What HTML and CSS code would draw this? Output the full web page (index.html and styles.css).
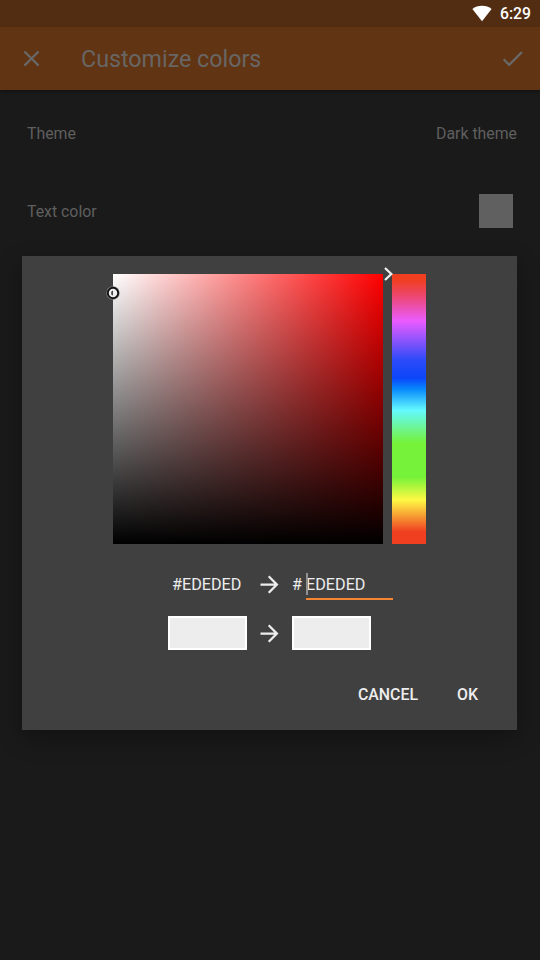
FILE: index.html
```html
<!DOCTYPE html>
<html lang="en">
<head>
<meta charset="utf-8">
<title>Customize colors</title>
<link rel="stylesheet" href="styles.css">
</head>
<body>
<div class="status-bar">
  <svg class="wifi" viewBox="0 0 20 17"><path d="M0.4 3.9C3 1.8 6.300 .7 10 .7s7 1.100 9.600 3.200L10 16.200z"/></svg>
  <span class="clock">6:29</span>
</div>
<header class="app-bar">
  <svg class="icon" viewBox="0 0 24 24"><path d="M19 6.410L17.590 5 12 10.590 6.410 5 5 6.410 10.590 12 5 17.590 6.410 19 12 13.410 17.590 19 19 17.590 13.410 12z"/></svg>
  <h1 class="title">Customize colors</h1>
  <svg class="icon check" viewBox="0 0 24 24"><path d="M9 16.170L4.830 12l-1.420 1.410L9 19 21 7l-1.410-1.410z"/></svg>
</header>
<main class="settings">
  <div class="row"><span>Theme</span><span>Dark theme</span></div>
  <div class="row"><span>Text color</span><span class="swatch"></span></div>
</main>
<div class="dialog">
  <div class="picker">
    <div class="shade">
      <svg class="target" viewBox="0 0 14 14"><circle cx="7" cy="7" r="6.700" class="halo"/><circle cx="7" cy="7" r="5.200" class="ring"/><path d="M7 4.400a1.900 2.600 0 0 0 0 5.200z" class="core"/></svg>
    </div>
    <div class="hue">
      <svg class="pointer" viewBox="0 0 9 14"><path d="M1 1l6.300 6L1 13"/></svg>
    </div>
  </div>
  <div class="values">
    <span class="old-hex">#EDEDED</span>
    <svg class="arrow" viewBox="0 0 24 24"><path d="M12 4l-1.410 1.410L16.170 11H4v2h12.170l-5.580 5.590L12 20l8-8z"/></svg>
    <div class="new-hex"><span>#</span><span class="field">EDEDED</span></div>
  </div>
  <div class="values samples">
    <span class="sample"></span>
    <svg class="arrow" viewBox="0 0 24 24"><path d="M12 4l-1.410 1.410L16.170 11H4v2h12.170l-5.580 5.590L12 20l8-8z"/></svg>
    <span class="sample"></span>
  </div>
  <div class="actions"><span>CANCEL</span><span>OK</span></div>
</div>
</body>
</html>
```
FILE: styles.css
```css
* { box-sizing: border-box; }
body {
  margin: 0;
  width: 540px;
  height: 960px;
  overflow: hidden;
  position: relative;
  background: #1a1a1a;
  color: #5f5f5f;
  font: 15.850px/20px Roboto, sans-serif;
}
svg { display: block; flex: none; }
.status-bar {
  height: 27px;
  padding-right: 9px;
  display: flex;
  align-items: center;
  justify-content: flex-end;
  gap: 8px;
  background: #522d12;
  color: #fff;
}
.wifi { width: 20px; height: 17px; fill: #fff; }
.clock { font-weight: 500; font-size: 15.750px; }
.app-bar {
  height: 63px;
  padding: 0 14px 0 18px;
  display: flex;
  align-items: center;
  background: #613413;
  box-shadow: 0 3px 3px -1px rgba(0, 0, 0, .3);
}
.icon { width: 27px; height: 27px; fill: #6a6866; }
.check { margin-bottom: 1px; }
.title {
  flex: 1;
  margin: 0 0 0 36px;
  font-size: 23.250px;
  line-height: 28px;
  padding-top: 1px;
  font-weight: 400;
  color: #686664;
}
.settings { padding: 4px 23px 0 27px; }
.row {
  height: 78px;
  display: flex;
  align-items: center;
  justify-content: space-between;
}
.row span:not(.swatch) { padding-top: 2px; }
.swatch { width: 34px; height: 34px; margin-right: 4px; background: #606060; }
.dialog {
  position: absolute;
  left: 22px;
  top: 256px;
  width: 495px;
  height: 474px;
  padding-top: 18px;
  background: #404040;
  color: #ededed;
  box-shadow: 0 8px 22px rgba(0, 0, 0, .32);
}
.picker { display: flex; gap: 9px; margin-left: 91px; }
.shade {
  position: relative;
  width: 270px;
  height: 270px;
  background: linear-gradient(to bottom, transparent, #000), linear-gradient(to right, #fff, #f00);
}
.target { position: absolute; left: -7px; top: 12px; width: 14px; height: 14px; }
.halo { fill: #888; }
.ring { fill: #eee; stroke: #111; stroke-width: 1.900; }
.core { fill: #444; }
.hue {
  position: relative;
  width: 34px;
  height: 270px;
  background: linear-gradient(to bottom, #ef3e20 0, #ef3e20 6px, #ed4565 20px, #eb5cff 47px, #2d4bf8 86px, #0c46f9 104px, #0788fb 115px, #63f9ff 136px, #75f239 169px, #75f239 203px, #fff944 226px, #ef3e20 258px);
}
.pointer { position: absolute; left: -8.500px; top: -7px; width: 9px; height: 14px; fill: none; stroke: #ededed; stroke-width: 2.300; }
.values {
  display: grid;
  grid-template-columns: 79px 27px 101px;
  column-gap: 9px;
  align-items: center;
  margin: 26px 0 0 146px;
  height: 30px;
  font-size: 16.200px;
}
.old-hex { padding-left: 4px; }
.arrow { width: 27px; height: 27px; fill: #ededed; }
.values:not(.samples) .arrow { margin-bottom: 2px; }
.new-hex { display: flex; justify-content: space-between; height: 30px; line-height: 29px; }
.field { position: relative; width: 87px; border-bottom: 2px solid #f58530; }
.field::before { content: ""; position: absolute; left: 0; top: 3px; width: 1.500px; height: 22px; background: #919191; }
.samples { margin-top: 16px; height: 34px; }
.sample { width: 79px; height: 34px; background: #ededed; border: 2px solid #fff; }
.actions {
  display: flex;
  justify-content: flex-end;
  gap: 39px;
  margin-top: 35px;
  padding-right: 39px;
  font-weight: 500;
  font-size: 15.900px;
}
```
